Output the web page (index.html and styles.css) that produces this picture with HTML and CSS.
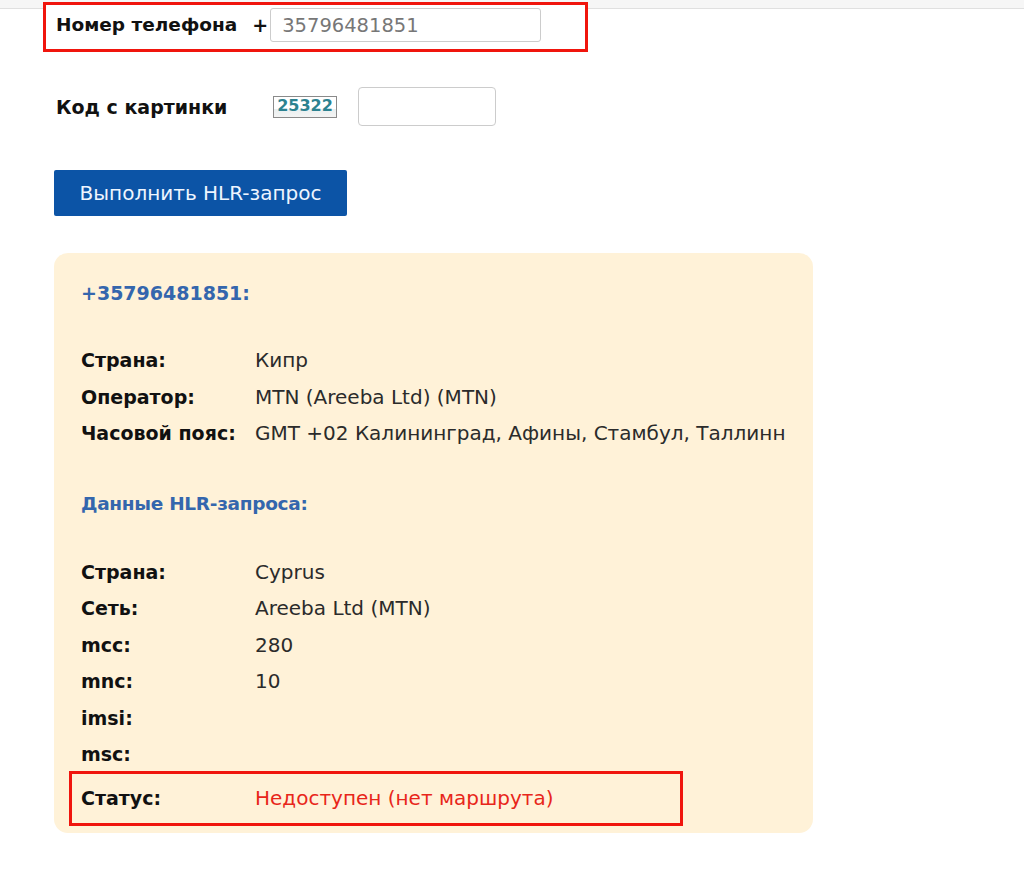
FILE: index.html
```html
<!DOCTYPE html>
<html lang="ru">

<head>
    <meta charset="UTF-8">
    <meta name="viewport" content="width=device-width, initial-scale=1.0">
    <title>HLR-запрос</title>
    <link rel="stylesheet" href="styles.css">
</head>

<body>
    <div class="container">
        <div class="phoneRow marked">
            <label class="fieldLabel phoneLabel" for="phone">Номер телефона</label>
            <span class="plus">+</span>
            <input type="text" id="phone" class="phoneInput" value="35796481851">
        </div>

        <div class="captchaRow">
            <label class="fieldLabel captchaLabel" for="captcha">Код с картинки</label>
            <span class="captchaImg">25322</span>
            <input type="text" id="captcha" class="captchaInput">
        </div>

        <button class="customBtn">Выполнить HLR-запрос</button>

        <div class="result">
            <div class="title">+35796481851:</div>
            <div class="info">
                <div class="key">Страна:</div>
                <div class="val">Кипр</div>
                <div class="key">Оператор:</div>
                <div class="val">MTN (Areeba Ltd) (MTN)</div>
                <div class="key">Часовой пояс:</div>
                <div class="val">GMT +02 Калининград, Афины, Стамбул, Таллинн</div>
            </div>

            <div class="title title2">Данные HLR-запроса:</div>
            <div class="info info2">
                <div class="key">Страна:</div>
                <div class="val">Cyprus</div>
                <div class="key">Сеть:</div>
                <div class="val">Areeba Ltd (MTN)</div>
                <div class="key">mcc:</div>
                <div class="val">280</div>
                <div class="key">mnc:</div>
                <div class="val">10</div>
                <div class="key">imsi:</div>
                <div class="val"></div>
                <div class="key">msc:</div>
                <div class="val"></div>
            </div>
            <div class="info status marked">
                <div class="key">Статус:</div>
                <div class="val error">Недоступен (нет маршрута)</div>
            </div>
        </div>
    </div>
</body>

</html>
```

FILE: styles.css
```css
body {
    font-family: 'DejaVu Sans', 'Noto Sans', sans-serif;
    margin: 0;
    color: #111;
    background: linear-gradient(#f6f6f6 0, #f6f6f6 8px, #e0e0e0 8px, #e0e0e0 9px, #fff 9px);
    min-height: 100vh;
}

.container {
    padding: 2px 0 0 54px;
}

.marked {
    border: 3px solid #f0150d;
    box-sizing: border-box;
}

.phoneRow {
    display: flex;
    align-items: flex-start;
    width: 545px;
    height: 50px;
    margin-left: -11px;
    padding: 3px 0 0 10px;
    background: #fff;
}

.fieldLabel {
    font-weight: bold;
    font-size: 19px;
    line-height: 34px;
}

.phoneLabel {
    font-size: 18.5px;
}

.plus {
    font-weight: bold;
    font-size: 19px;
    line-height: 34px;
    margin-left: 15px;
    margin-right: 2px;
}

input {
    box-sizing: border-box;
    border: 1px solid #ccc;
    border-radius: 3px;
    outline: none;
    font-family: inherit;
    background: #fff;
}

.phoneInput {
    width: 271px;
    height: 34px;
    padding: 0 11px;
    font-size: 19.5px;
    color: #777;
}

.captchaRow {
    display: flex;
    align-items: center;
    margin-top: 35px;
    padding-left: 2px;
}

.captchaLabel {
    width: 217px;
}

.captchaImg {
    width: 64px;
    height: 22px;
    box-sizing: border-box;
    border: 1px solid #8a8a8a;
    background: linear-gradient(#fff 0, #fff 60%, #e9eff0 60%, #f4f4f4 100%);
    color: #2c8290;
    font-size: 16px;
    font-weight: bold;
    line-height: 18px;
    text-align: center;
}

.captchaInput {
    width: 138px;
    height: 39px;
    margin-left: 21px;
    border-radius: 4px;
}

.customBtn {
    display: block;
    margin-top: 44px;
    width: 293px;
    height: 46px;
    border: none;
    border-radius: 2px;
    background-color: #0c54a6;
    color: #eef5ff;
    font-family: inherit;
    font-size: 20px;
    cursor: pointer;
}

.result {
    margin-top: 37px;
    width: 759px;
    box-sizing: border-box;
    padding: 28px 0 7px 27px;
    background-color: #fff2d8;
    border-radius: 14px;
}

.title {
    font-weight: bold;
    font-size: 19px;
    line-height: 24px;
    color: #3466ad;
}

.title2 {
    margin-top: 40px;
    font-size: 18.5px;
    letter-spacing: -0.3px;
}

.info {
    display: grid;
    grid-template-columns: 174px 1fr;
    grid-auto-rows: 36.5px;
    align-items: center;
    margin-top: 37px;
}

.info2 {
    margin-top: 38px;
}

.key {
    font-weight: bold;
    font-size: 19px;
}

.val {
    font-size: 20px;
    color: #2b2b2b;
}

.status {
    margin: -2px 0 0 -12px;
    width: 614px;
    height: 55px;
    padding-left: 9px;
    grid-auto-rows: 49px;
}

.error {
    color: #e8261a;
}
```
